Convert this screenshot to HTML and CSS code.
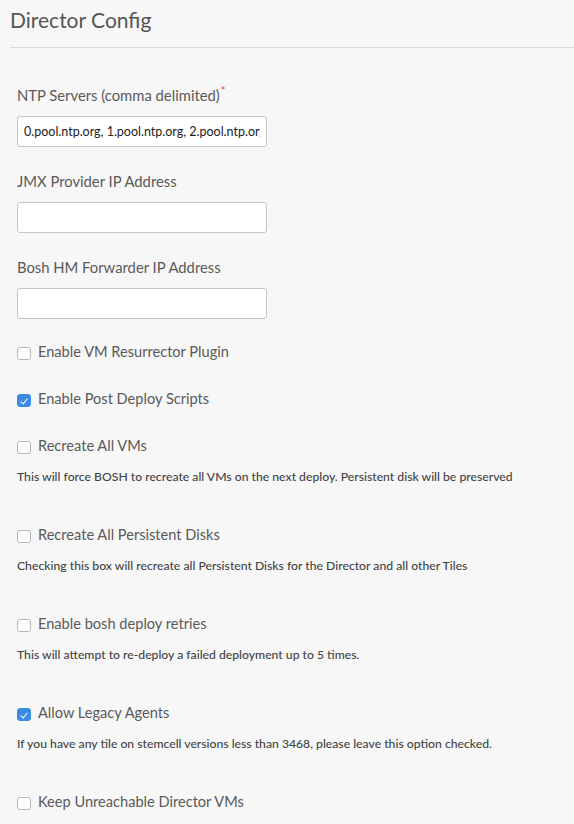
FILE: index.html
```html
<!DOCTYPE html>
<html lang="en">
<head>
<meta charset="utf-8">
<title>Director Config</title>
<link rel="stylesheet" href="styles.css">
</head>
<body>
<div class="page">
  <header class="page-header">
    <h1 class="page-title">Director Config</h1>
  </header>
  <form class="config-form">
    <div class="field">
      <label class="field-label" for="ntp">NTP Servers (comma delimited)<span class="required">*</span></label>
      <input class="text-input" id="ntp" type="text" value="0.pool.ntp.org, 1.pool.ntp.org, 2.pool.ntp.org">
    </div>
    <div class="field">
      <label class="field-label" for="jmx">JMX Provider IP Address</label>
      <input class="text-input" id="jmx" type="text">
    </div>
    <div class="field field-last">
      <label class="field-label" for="hm">Bosh HM Forwarder IP Address</label>
      <input class="text-input" id="hm" type="text">
    </div>

    <div class="check">
      <label class="check-row"><input class="checkbox" type="checkbox"><span>Enable VM Resurrector Plugin</span></label>
    </div>
    <div class="check">
      <label class="check-row"><input class="checkbox" type="checkbox" checked><span>Enable Post Deploy Scripts</span></label>
    </div>
    <div class="check check-help">
      <label class="check-row"><input class="checkbox" type="checkbox"><span>Recreate All VMs</span></label>
      <p class="help">This will force BOSH to recreate all VMs on the next deploy. Persistent disk will be preserved</p>
    </div>
    <div class="check check-help">
      <label class="check-row"><input class="checkbox" type="checkbox"><span>Recreate All Persistent Disks</span></label>
      <p class="help">Checking this box will recreate all Persistent Disks for the Director and all other Tiles</p>
    </div>
    <div class="check check-help">
      <label class="check-row"><input class="checkbox" type="checkbox"><span>Enable bosh deploy retries</span></label>
      <p class="help">This will attempt to re-deploy a failed deployment up to 5 times.</p>
    </div>
    <div class="check check-help">
      <label class="check-row"><input class="checkbox" type="checkbox" checked><span>Allow Legacy Agents</span></label>
      <p class="help">If you have any tile on stemcell versions less than 3468, please leave this option checked.</p>
    </div>
    <div class="check">
      <label class="check-row"><input class="checkbox" type="checkbox"><span>Keep Unreachable Director VMs</span></label>
    </div>
  </form>
</div>
</body>
</html>
```
FILE: styles.css
```css
* { box-sizing: border-box; }

html, body {
  margin: 0;
  padding: 0;
  background: #f7f7f7;
}

body {
  font-family: Lato, "Open Sans", sans-serif;
  color: #5a5a5a;
}

.page-header {
  margin-left: 10px;
  height: 48px;
  border-bottom: 1px solid #dcdcdc;
}

.page-title {
  margin: 0;
  padding-top: 5px;
  font-size: 21px;
  line-height: 30px;
  font-weight: normal;
  color: #555;
}

.config-form {
  padding: 37px 0 0 17px;
  display: flex;
  flex-direction: column;
}

.field {
  display: flex;
  flex-direction: column;
  align-items: flex-start;
  margin-bottom: 24px;
}

.field-last { margin-bottom: 23px; }

.field-label {
  font-size: 14.8px;
  line-height: 20px;
  margin-bottom: 11px;
  color: #5a5a5a;
}

.required {
  color: #e5483f;
  font-size: 11px;
  vertical-align: top;
  line-height: 12px;
  margin-left: 1px;
}

.text-input {
  width: 250px;
  height: 31px;
  margin: 0;
  padding: 0 6px;
  border: 1px solid #c6c6c6;
  border-radius: 3px;
  background: #fff;
  font-family: Lato, "Open Sans", sans-serif;
  font-size: 12.5px;
  color: #222;
  outline: none;
}

.check { margin-bottom: 27px; }
.check-help { margin-bottom: 40px; }

.check-row {
  display: flex;
  align-items: center;
  height: 20px;
  font-size: 14.6px;
  line-height: 20px;
  color: #5a5a5a;
}

.checkbox {
  appearance: none;
  -webkit-appearance: none;
  width: 14px;
  height: 13px;
  margin: 3px 7px 0 0;
  border: 1px solid #b8b8b8;
  border-radius: 3px;
  background: #fff;
  position: relative;
  flex: none;
}

.checkbox:checked {
  background: #3b8be5;
  border-color: #3b8be5;
}

.checkbox:checked::after {
  content: "";
  position: absolute;
  left: 4px;
  top: 1.5px;
  width: 3px;
  height: 6px;
  border: solid #fff;
  border-width: 0 1.5px 1.5px 0;
  transform: rotate(40deg);
}

.help {
  margin: 13px 0 0;
  font-size: 12.2px;
  font-weight: 500;
  line-height: 16px;
  color: #444;
}
```
